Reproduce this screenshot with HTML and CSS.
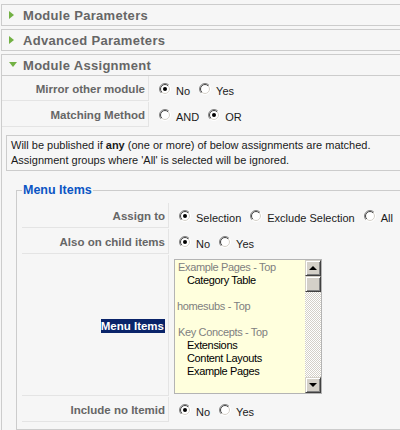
FILE: index.html
```html
<!DOCTYPE html>
<html>
<head>
<meta charset="utf-8">
<title>Module Assignment</title>
<link rel="stylesheet" href="styles.css">
</head>
<body>
<svg class="defs" width="0" height="0" aria-hidden="true">
  <defs>
    <linearGradient id="ring-outer" x1="0" y1="0" x2="1" y2="1">
      <stop offset="0.5" stop-color="#808080"/>
      <stop offset="0.5" stop-color="#ffffff"/>
    </linearGradient>
    <linearGradient id="ring-inner" x1="0" y1="0" x2="1" y2="1">
      <stop offset="0.5" stop-color="#404040"/>
      <stop offset="0.5" stop-color="#d4d0c8"/>
    </linearGradient>
    <symbol id="radio-off" viewBox="0 0 12 12">
      <circle cx="6" cy="6" r="5.5" fill="#fff" stroke="url(#ring-outer)"/>
      <circle cx="6" cy="6" r="4.5" fill="none" stroke="url(#ring-inner)"/>
    </symbol>
    <symbol id="radio-on" viewBox="0 0 12 12">
      <circle cx="6" cy="6" r="5.5" fill="#fff" stroke="url(#ring-outer)"/>
      <circle cx="6" cy="6" r="4.5" fill="none" stroke="url(#ring-inner)"/>
      <circle cx="6" cy="6" r="2" fill="#000"/>
    </symbol>
  </defs>
</svg>

<div class="pane">
  <div class="panel">
    <h3 class="panel-title">
      <span class="toggle"><svg width="6" height="8" viewBox="0 0 6 8"><polygon points="0,0 5,4 0,8" fill="#72b144"/></svg></span>
      Module Parameters
    </h3>
  </div>
  <div class="panel">
    <h3 class="panel-title">
      <span class="toggle"><svg width="6" height="8" viewBox="0 0 6 8"><polygon points="0,0 5,4 0,8" fill="#72b144"/></svg></span>
      Advanced Parameters
    </h3>
  </div>
  <div class="panel">
    <h3 class="panel-title open">
      <span class="toggle"><svg width="8" height="6" viewBox="0 0 8 6"><polygon points="0,0 8,0 4,5" fill="#72b144"/></svg></span>
      Module Assignment
    </h3>
    <div class="panel-body">
      <div class="paramlist">
        <div class="key">Mirror other module</div>
        <div class="value">
          <label class="opt"><svg class="radio"><use href="#radio-on"/></svg><span class="opt-text">No</span></label>
          <label class="opt"><svg class="radio"><use href="#radio-off"/></svg><span class="opt-text">Yes</span></label>
        </div>
        <div class="key">Matching Method</div>
        <div class="value">
          <label class="opt"><svg class="radio"><use href="#radio-off"/></svg><span class="opt-text">AND</span></label>
          <label class="opt"><svg class="radio"><use href="#radio-on"/></svg><span class="opt-text">OR</span></label>
        </div>
      </div>

      <div class="note">Will be published if <b>any</b> (one or more) of below assignments are matched.<br>Assignment groups where 'All' is selected will be ignored.</div>

      <fieldset class="group">
        <legend>Menu Items</legend>
        <div class="paramlist">
          <div class="key">Assign to</div>
          <div class="value">
            <label class="opt"><svg class="radio"><use href="#radio-on"/></svg><span class="opt-text">Selection</span></label>
            <label class="opt"><svg class="radio"><use href="#radio-off"/></svg><span class="opt-text">Exclude Selection</span></label>
            <label class="opt"><svg class="radio"><use href="#radio-off"/></svg><span class="opt-text">All</span></label>
          </div>
          <div class="key">Also on child items</div>
          <div class="value">
            <label class="opt"><svg class="radio"><use href="#radio-on"/></svg><span class="opt-text">No</span></label>
            <label class="opt"><svg class="radio"><use href="#radio-off"/></svg><span class="opt-text">Yes</span></label>
          </div>
          <div class="key key-tall"><span class="selected">Menu Items</span></div>
          <div class="value value-list">
            <div class="listbox">
              <div class="options">
                <div class="og">Example Pages - Top</div>
                <div class="oi">Category Table</div>
                <div class="blank"></div>
                <div class="og og-plain">homesubs - Top</div>
                <div class="blank"></div>
                <div class="og">Key Concepts - Top</div>
                <div class="oi">Extensions</div>
                <div class="oi">Content Layouts</div>
                <div class="oi">Example Pages</div>
              </div>
              <div class="scrollbar">
                <div class="sb-btn"><span class="arrow-up"></span></div>
                <div class="sb-thumb"></div>
                <div class="sb-track"></div>
                <div class="sb-btn"><span class="arrow-down"></span></div>
              </div>
            </div>
          </div>
          <div class="key">Include no Itemid</div>
          <div class="value">
            <label class="opt"><svg class="radio"><use href="#radio-on"/></svg><span class="opt-text">No</span></label>
            <label class="opt"><svg class="radio"><use href="#radio-off"/></svg><span class="opt-text">Yes</span></label>
          </div>
        </div>
      </fieldset>
    </div>
  </div>
</div>
</body>
</html>
```
FILE: styles.css
```css
html, body {
  margin: 0;
  overflow: hidden;
}
body {
  background: #f6f6f6;
  font-family: "Liberation Sans", Arial, sans-serif;
  font-size: 11px;
  color: #1a1a1a;
  padding: 4px 0 0 1px;
  width: 470px;
}
.defs {
  position: absolute;
  width: 0;
  height: 0;
  overflow: hidden;
}
.panel {
  border: 1px solid #cccccc;
  margin-bottom: 3px;
  background: #f6f6f6;
}
.panel-title {
  margin: 0;
  height: 20px;
  display: flex;
  align-items: center;
  padding-left: 7px;
  font-size: 13px;
  font-weight: bold;
  color: #666;
  letter-spacing: 0.3px;
}
.panel-title.open {
  border-bottom: 1px solid #cccccc;
}
.toggle {
  width: 14px;
  display: flex;
  align-items: center;
}
.toggle svg {
  display: block;
}
.paramlist {
  display: grid;
  grid-template-columns: 147px 1fr;
  row-gap: 1px;
}
.key {
  box-sizing: border-box;
  height: 25px;
  display: flex;
  align-items: center;
  justify-content: flex-end;
  padding: 2px 3px 0 0;
  border-right: 1px solid #e4e4e4;
  border-bottom: 1px solid #e4e4e4;
  font-size: 11.5px;
  font-weight: bold;
  color: #666;
  white-space: nowrap;
}
.key-tall {
  height: auto;
}
.value {
  display: flex;
  align-items: flex-start;
  padding: 7px 0 0 10px;
}
.opt {
  display: flex;
  align-items: flex-start;
  margin-right: 9px;
}
.radio {
  width: 12px;
  height: 12px;
  flex: none;
  margin-right: 5px;
}
.opt-text {
  margin-top: 2px;
  line-height: 13px;
  white-space: nowrap;
}
.note {
  margin: 8px 0 0 4px;
  border: 1px solid #cccccc;
  padding: 2px 4px;
  line-height: 15px;
}
.group {
  margin: 12px 0 0 14px;
  border: 1px solid #cccccc;
  padding: 6px 5px 7px 5px;
  min-width: 0;
}
.group legend {
  padding: 0 1px;
  font-size: 12.5px;
  font-weight: bold;
  color: #0b55c4;
}
.selected {
  background: #0a246a;
  color: #fff;
  line-height: 14px;
  display: inline-block;
  padding: 0 1px 0 0;
}
.value-list {
  padding: 4px 0 2px 5px;
}
.listbox {
  box-sizing: border-box;
  width: 148px;
  height: 135px;
  border: 1px solid #b4b4b4;
  background: #ffffdd;
  display: flex;
}
.options {
  flex: 1;
  padding: 1px 0 0 3px;
  line-height: 13px;
  letter-spacing: -0.35px;
  overflow: hidden;
  white-space: nowrap;
}
.og {
  color: #808080;
}
.og-plain {
  margin-left: -1px;
}
.oi {
  color: #000;
  padding-left: 9px;
}
.blank {
  height: 13px;
}
.scrollbar {
  width: 16px;
  display: flex;
  flex-direction: column;
}
.sb-btn, .sb-thumb {
  box-sizing: border-box;
  height: 16px;
  background: #d4d0c8;
  border: 1px solid;
  border-color: #d4d0c8 #404040 #404040 #d4d0c8;
  box-shadow: inset 1px 1px #fff, inset -1px -1px #808080;
  display: flex;
  align-items: center;
  justify-content: center;
}
.sb-track {
  flex: 1;
  background: repeating-conic-gradient(#d4d0c8 0 25%, #fff 0 50%) 0 0 / 2px 2px;
}
.arrow-up, .arrow-down {
  width: 0;
  height: 0;
  border-left: 4px solid transparent;
  border-right: 4px solid transparent;
}
.arrow-up {
  border-bottom: 4px solid #000;
}
.arrow-down {
  border-top: 4px solid #000;
}
```
